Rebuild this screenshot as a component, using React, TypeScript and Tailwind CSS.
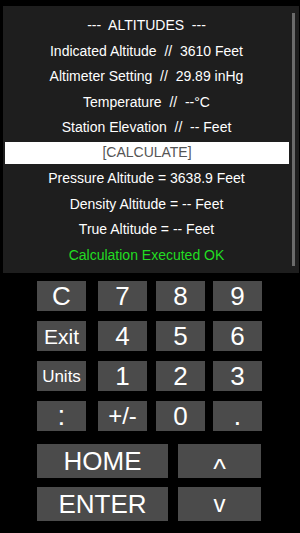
import React from 'react';

const lines = [
  '---  ALTITUDES  ---',
  'Indicated Altitude  //  3610 Feet',
  'Altimeter Setting  //  29.89 inHg',
  'Temperature  //  --°C',
  'Station Elevation  //  -- Feet',
];

const results = ['Pressure Altitude = 3638.9 Feet', 'Density Altitude = -- Feet', 'True Altitude = -- Feet'];

const rows: { label: string; size: string }[][] = [
  [
    { label: 'C', size: 'text-[26px]' },
    { label: '7', size: 'text-[26px]' },
    { label: '8', size: 'text-[26px]' },
    { label: '9', size: 'text-[26px]' },
  ],
  [
    { label: 'Exit', size: 'text-[21px]' },
    { label: '4', size: 'text-[26px]' },
    { label: '5', size: 'text-[26px]' },
    { label: '6', size: 'text-[26px]' },
  ],
  [
    { label: 'Units', size: 'text-[17px]' },
    { label: '1', size: 'text-[26px]' },
    { label: '2', size: 'text-[26px]' },
    { label: '3', size: 'text-[26px]' },
  ],
  [
    { label: ':', size: 'text-[28px]' },
    { label: '+/-', size: 'text-[24px]' },
    { label: '0', size: 'text-[26px]' },
    { label: '.', size: 'text-[28px]' },
  ],
];

function Key({ label, size, className, children }: { label?: string; size: string; className: string; children?: React.ReactNode }) {
  return (
    <button className={`flex items-center justify-center bg-[#4b4b4b] text-white leading-none ${size} ${className}`}>
      {children ?? label}
    </button>
  );
}

export default function App() {
  return (
    <div className="h-[533px] w-[300px] overflow-hidden bg-black pt-[6px] font-['Liberation_Sans',Arial,sans-serif]">
      {/* display panel */}
      <div className="relative ml-[3px] mr-[1px] h-[267px] bg-[#1e1e1e] pt-[11px] text-[14px] text-white">
        <div className="absolute right-[4px] top-[7px] h-[253px] w-[3px] bg-[#6b6b6b]" />
        <div className="flex flex-col items-center pr-[9px]">
          {lines.map((l) => (
            <div key={l} className="h-[25.6px] leading-[16px] whitespace-pre">
              {l}
            </div>
          ))}
        </div>
        <div className="ml-[2px] mr-[10px] mt-[-3px] flex h-[22px] items-center justify-center bg-white text-[#555]">
          [CALCULATE]
        </div>
        <div className="mt-[6px] flex flex-col items-center pr-[9px]">
          {results.map((l) => (
            <div key={l} className="h-[25.6px] leading-[16px] whitespace-pre">
              {l}
            </div>
          ))}
          <div className="leading-[16px] text-[#22dd22]">Calculation Executed OK</div>
        </div>
      </div>

      {/* keypad */}
      <div className="ml-[37px] mt-[8px] flex flex-col gap-[10px]">
        {rows.map((row, i) => (
          <div key={i} className="flex">
            <Key {...row[0]} className="h-[30px] w-[49px]" />
            <Key {...row[1]} className="ml-[12px] h-[30px] w-[49px]" />
            <Key {...row[2]} className="ml-[9px] h-[30px] w-[49px]" />
            <Key {...row[3]} className="ml-[8px] h-[30px] w-[49px]" />
          </div>
        ))}
      </div>
      <div className="ml-[37px] mt-[13px] flex flex-col gap-[9px]">
        <div className="flex gap-[10px]">
          <Key label="HOME" size="text-[26px]" className="h-[34px] w-[131px]" />
          <Key size="text-[27px]" className="h-[34px] w-[83px]">
            <span className="translate-y-[8px]">^</span>
          </Key>
        </div>
        <div className="flex gap-[10px]">
          <Key label="ENTER" size="text-[26px]" className="h-[34px] w-[131px]" />
          <Key label="v" size="text-[24px]" className="h-[34px] w-[83px]" />
        </div>
      </div>
    </div>
  );
}
